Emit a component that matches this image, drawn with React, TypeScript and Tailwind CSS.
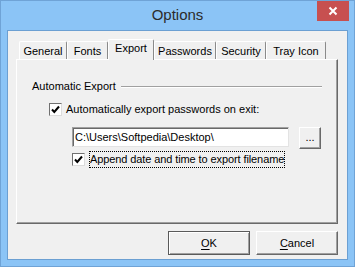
const tabs = [
  { label: "General", w: "w-[48px]" },
  { label: "Fonts", w: "w-[41px]" },
  { label: "Export", w: "w-[46px]", active: true },
  { label: "Passwords", w: "w-[62px]" },
  { label: "Security", w: "w-[50px]" },
  { label: "Tray Icon", w: "w-[60px]" },
];

const CheckBox = () => (
  <div className="w-[13px] h-[13px] shrink-0 bg-white border-t border-l border-[#707070] border-b border-r border-b-[#dcdcdc] border-r-[#dcdcdc] flex items-center justify-center">
    <svg width="9" height="9" viewBox="0 0 9 9">
      <path d="M1 4.5 L3.3 7 L8 1.5" fill="none" stroke="#000" strokeWidth="2" />
    </svg>
  </div>
);

export default function App() {
  return (
    <div className="relative w-[355px] h-[267px] bg-[#8bc4f6] border border-[#6fa3d6] flex flex-col font-['Liberation_Sans',Arial,sans-serif] text-black text-[11px]">
      {/* title bar */}
      <div className="h-[29px] flex items-center justify-center text-[15px] text-[#2b2b2b] pb-[1px]">Options</div>
      <div className="absolute right-[5px] top-0 w-[32px] h-[20px] bg-[#c75050] flex items-center justify-center">
        <svg width="10" height="10" viewBox="0 0 10 10">
          <path d="M1.5 1.5 L8.5 8.5 M8.5 1.5 L1.5 8.5" stroke="#fff" strokeWidth="2" />
        </svg>
      </div>

      {/* client */}
      <div className="relative flex-1 mx-[6px] mb-[6px] border border-[#6b9fd2] bg-[#f0f0f0] pl-[8px] pr-[9px] pt-[8px] flex flex-col">
        <div className="flex items-end ml-[3px] h-[20px]">
          {tabs.map((t) =>
            t.active ? (
              <div
                key={t.label}
                className={`${t.w} relative z-10 -mb-px h-[21px] bg-[#f0f0f0] border-t border-l border-white border-r border-r-[#8a8a8a] rounded-t-[2px] flex justify-center pt-[2px] leading-[13px]`}
              >
                {t.label}
              </div>
            ) : (
              <div
                key={t.label}
                className={`${t.w} h-[18px] bg-[#f0f0f0] border-t border-l border-white border-r border-r-[#8a8a8a] rounded-t-[2px] flex justify-center pt-[3px] leading-[13px]`}
              >
                {t.label}
              </div>
            )
          )}
        </div>

        {/* panel */}
        <div className="h-[165px] border-t border-l border-white border-r border-b border-r-[#696969] border-b-[#696969] shadow-[inset_-1px_-1px_0_#a0a0a0] flex flex-col pt-[20px] pl-[15px] pr-[15px]">
          <div className="flex items-center h-[13px] leading-[13px]">
            <span>Automatic Export</span>
            <div className="flex-1 ml-[5px] border-t border-[#a0a0a0] border-b border-b-white" />
          </div>

          <div className="flex items-center gap-[4px] mt-[10px] ml-[17px] h-[13px] leading-[13px]">
            <CheckBox />
            <span>Automatically export passwords on exit:</span>
          </div>

          <div className="flex items-start mt-[11px] ml-[40px]">
            <div className="w-[217px] h-[20px] bg-white border border-[#a0a0a0] border-b-[#e3e3e3] border-r-[#e3e3e3] shadow-[inset_1px_1px_0_#696969] pl-[2px] flex items-center leading-[13px]">
              C:\Users\Softpedia\Desktop\
            </div>
            <div className="ml-[10px] w-[22px] h-[22px] bg-[#f0f0f0] border-t border-l border-white border-r border-b border-r-[#696969] border-b-[#696969] shadow-[inset_-1px_-1px_0_#a0a0a0] flex items-center justify-center leading-[11px] pb-[2px]">
              ...
            </div>
          </div>

          <div className="flex items-center gap-[4px] mt-[2px] ml-[40px] h-[17px]">
            <CheckBox />
            <span className="border border-dotted border-black h-[17px] leading-[15px] tracking-[-0.1px]">
              Append date and time to export filename
            </span>
          </div>
        </div>

        {/* buttons */}
        <div className="flex justify-end gap-[6px] mt-[7px]">
          <button className="w-[82px] h-[24px] bg-[#f0f0f0] border border-[#5a5a5a] shadow-[inset_1px_1px_0_#fff,inset_-1px_-1px_0_#a0a0a0] text-[11px] leading-[13px]">
            <span className="underline underline-offset-2">O</span>K
          </button>
          <button className="w-[82px] h-[24px] bg-[#f0f0f0] border-t border-l border-white border-r border-b border-r-[#696969] border-b-[#696969] shadow-[inset_-1px_-1px_0_#a0a0a0] text-[11px] leading-[13px]">
            <span className="underline underline-offset-2">C</span>ancel
          </button>
        </div>
      </div>
    </div>
  );
}
